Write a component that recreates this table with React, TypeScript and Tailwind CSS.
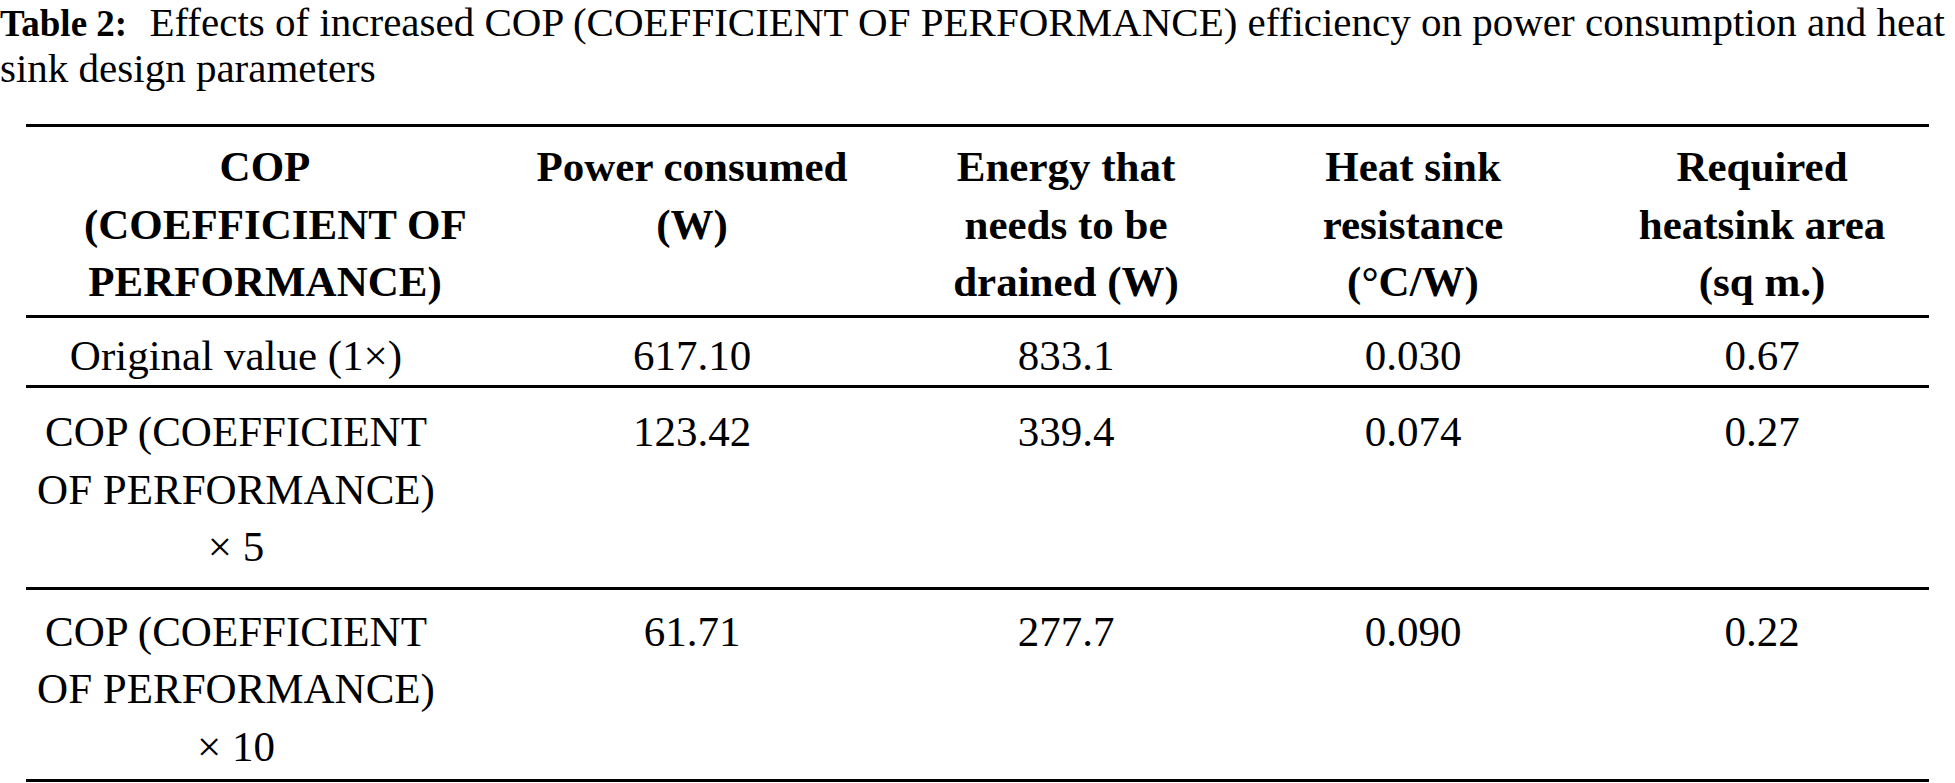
import React from "react";

const rows: { label: React.ReactNode; values: string[]; cls: string }[] = [
  { label: "Original value (1×)", values: ["617.10", "833.1", "0.030", "0.67"], cls: "pt-[9px] pb-[1px]" },
  {
    label: (
      <>
        COP (COEFFICIENT
        <br />
        OF PERFORMANCE)
        <br />× 5
      </>
    ),
    values: ["123.42", "339.4", "0.074", "0.27"],
    cls: "pt-[15px] pb-[11px]",
  },
  {
    label: (
      <>
        COP (COEFFICIENT
        <br />
        OF PERFORMANCE)
        <br />× 10
      </>
    ),
    values: ["61.71", "277.7", "0.090", "0.22"],
    cls: "pt-[13px] pb-[4px]",
  },
];

const widths = ["w-[420px] pl-[58px]", "w-[492px]", "w-[256px]", "w-[438px]", "w-[297px] pr-[37px]"];

const App: React.FC = () => {
  return (
    <div className="w-[1955px] h-[783px] overflow-hidden bg-white text-black font-['Liberation_Serif',serif]">
      <p className="text-[41px] leading-[45px] whitespace-nowrap">
        <span className="font-bold text-[37px] mr-[12px]">Table 2:</span> Effects of increased COP (COEFFICIENT OF PERFORMANCE) efficiency on power consumption and heat
        <br />
        sink design parameters
      </p>
      <table className="mt-[33px] ml-[26px] w-[1903px] table-fixed border-collapse border-t-[3px] border-black text-[43px] leading-[57.5px]">
        <thead>
          <tr className="border-b-[3px] border-black">
            {[
              <>COP<br />(COEFFICIENT OF<br />PERFORMANCE)</>,
              <>Power consumed<br />(W)</>,
              <>Energy that<br />needs to be<br />drained (W)</>,
              <>Heat sink<br />resistance<br />(°C/W)</>,
              <>Required<br />heatsink area<br />(sq m.)</>,
            ].map((h, i) => (
              <th key={i} className={`${widths[i]} align-top text-center font-bold whitespace-nowrap pt-[11px] pb-[4px]`}>
                {h}
              </th>
            ))}
          </tr>
        </thead>
        <tbody>
          {rows.map((r, ri) => (
            <tr key={ri} className="border-b-[3px] border-black">
              <td className={`align-top text-center whitespace-nowrap ${r.cls}`}>{r.label}</td>
              {r.values.map((v, vi) => (
                <td key={vi} className={`align-top text-center whitespace-nowrap ${r.cls} ${vi === 3 ? "pr-[37px]" : ""}`}>
                  {v}
                </td>
              ))}
            </tr>
          ))}
        </tbody>
      </table>
    </div>
  );
};

export default App;
